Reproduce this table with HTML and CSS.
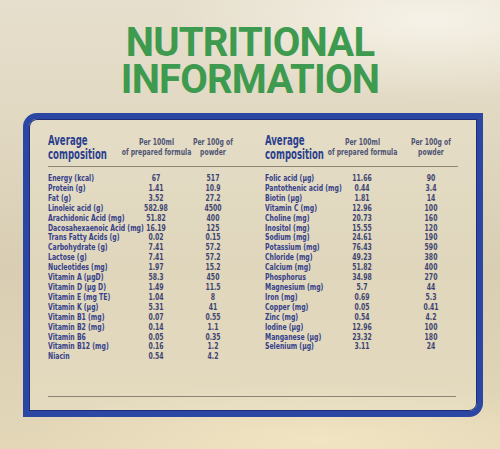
FILE: index.html
```html
<!DOCTYPE html>
<html lang="en">
<head>
  <meta charset="UTF-8" />
  <title>Nutritional Information</title>
  <link rel="stylesheet" href="styles.css">
</head>
<body>
  <div id="pagina">
    <h1 class="titulo">NUTRITIONAL<br>INFORMATION</h1>

    <div class="quadro">
      <div class="cabeca">
        <div class="bloco esq">
          <div class="nome"><span class="avg">Average<br>composition</span></div>
          <div class="c1"><span class="col">Per 100ml<br>of prepared formula</span></div>
          <div class="c2"><span class="col">Per 100g of<br>powder</span></div>
        </div>
        <div class="bloco dir">
          <div class="nome"><span class="avg">Average<br>composition</span></div>
          <div class="c1"><span class="col">Per 100ml<br>of prepared formula</span></div>
          <div class="c2"><span class="col">Per 100g of<br>powder</span></div>
        </div>
      </div>
      <div class="regua"></div>

      <div class="corpo">
        <div class="bloco esq">
          <div class="lista">
            <div class="linha"><span class="nome">Energy (kcal)</span><span class="c1">67</span><span class="c2">517</span></div>
            <div class="linha"><span class="nome">Protein (g)</span><span class="c1">1.41</span><span class="c2">10.9</span></div>
            <div class="linha"><span class="nome">Fat (g)</span><span class="c1">3.52</span><span class="c2">27.2</span></div>
            <div class="linha"><span class="nome">Linoleic acid (g)</span><span class="c1">582.98</span><span class="c2">4500</span></div>
            <div class="linha"><span class="nome">Arachidonic Acid (mg)</span><span class="c1">51.82</span><span class="c2">400</span></div>
            <div class="linha"><span class="nome">Dacosahexaenoic Acid (mg)</span><span class="c1">16.19</span><span class="c2">125</span></div>
            <div class="linha"><span class="nome">Trans Fatty Acids (g)</span><span class="c1">0.02</span><span class="c2">0.15</span></div>
            <div class="linha"><span class="nome">Carbohydrate (g)</span><span class="c1">7.41</span><span class="c2">57.2</span></div>
            <div class="linha"><span class="nome">Lactose (g)</span><span class="c1">7.41</span><span class="c2">57.2</span></div>
            <div class="linha"><span class="nome">Nucleotides (mg)</span><span class="c1">1.97</span><span class="c2">15.2</span></div>
            <div class="linha"><span class="nome">Vitamin A (µgD)</span><span class="c1">58.3</span><span class="c2">450</span></div>
            <div class="linha"><span class="nome">Vitamin D (µg D)</span><span class="c1">1.49</span><span class="c2">11.5</span></div>
            <div class="linha"><span class="nome">Vitamin E (mg TE)</span><span class="c1">1.04</span><span class="c2">8</span></div>
            <div class="linha"><span class="nome">Vitamin K (µg)</span><span class="c1">5.31</span><span class="c2">41</span></div>
            <div class="linha"><span class="nome">Vitamin B1 (mg)</span><span class="c1">0.07</span><span class="c2">0.55</span></div>
            <div class="linha"><span class="nome">Vitamin B2 (mg)</span><span class="c1">0.14</span><span class="c2">1.1</span></div>
            <div class="linha"><span class="nome">Vitamin B6</span><span class="c1">0.05</span><span class="c2">0.35</span></div>
            <div class="linha"><span class="nome">Vitamin B12 (mg)</span><span class="c1">0.16</span><span class="c2">1.2</span></div>
            <div class="linha"><span class="nome">Niacin</span><span class="c1">0.54</span><span class="c2">4.2</span></div>
          </div>
        </div>
        <div class="bloco dir">
          <div class="lista">
            <div class="linha"><span class="nome">Folic acid (µg)</span><span class="c1">11.66</span><span class="c2">90</span></div>
            <div class="linha"><span class="nome">Pantothenic acid (mg)</span><span class="c1">0.44</span><span class="c2">3.4</span></div>
            <div class="linha"><span class="nome">Biotin (µg)</span><span class="c1">1.81</span><span class="c2">14</span></div>
            <div class="linha"><span class="nome">Vitamin C (mg)</span><span class="c1">12.96</span><span class="c2">100</span></div>
            <div class="linha"><span class="nome">Choline (mg)</span><span class="c1">20.73</span><span class="c2">160</span></div>
            <div class="linha"><span class="nome">Inositol (mg)</span><span class="c1">15.55</span><span class="c2">120</span></div>
            <div class="linha"><span class="nome">Sodium (mg)</span><span class="c1">24.61</span><span class="c2">190</span></div>
            <div class="linha"><span class="nome">Potassium (mg)</span><span class="c1">76.43</span><span class="c2">590</span></div>
            <div class="linha"><span class="nome">Chloride (mg)</span><span class="c1">49.23</span><span class="c2">380</span></div>
            <div class="linha"><span class="nome">Calcium (mg)</span><span class="c1">51.82</span><span class="c2">400</span></div>
            <div class="linha"><span class="nome">Phosphorus</span><span class="c1">34.98</span><span class="c2">270</span></div>
            <div class="linha"><span class="nome">Magnesium (mg)</span><span class="c1">5.7</span><span class="c2">44</span></div>
            <div class="linha"><span class="nome">Iron (mg)</span><span class="c1">0.69</span><span class="c2">5.3</span></div>
            <div class="linha"><span class="nome">Copper (mg)</span><span class="c1">0.05</span><span class="c2">0.41</span></div>
            <div class="linha"><span class="nome">Zinc (mg)</span><span class="c1">0.54</span><span class="c2">4.2</span></div>
            <div class="linha"><span class="nome">Iodine (µg)</span><span class="c1">12.96</span><span class="c2">100</span></div>
            <div class="linha"><span class="nome">Manganese (µg)</span><span class="c1">23.32</span><span class="c2">180</span></div>
            <div class="linha"><span class="nome">Selenium (µg)</span><span class="c1">3.11</span><span class="c2">24</span></div>
          </div>
        </div>
      </div>

      <div class="regua fim"></div>
    </div>
  </div>
</body>
</html>
```

FILE: styles.css
```css
html, body {
  margin: 0; padding: 0;
  width: 500px;
  height: 449px;
  overflow: hidden;
}
body {
  background:
    radial-gradient(ellipse 260px 80px at 430px 20px, rgba(250,247,238,0.8), rgba(250,247,238,0) 100%),
    radial-gradient(ellipse 300px 60px at 320px 440px, rgba(243,230,196,0.9), rgba(243,230,196,0) 100%),
    linear-gradient(180deg, #e6dfcd 0%, #e2d9c3 25%, #d9ceb3 60%, #e3d7b8 100%);
  font-family: "DejaVu Sans Condensed", "Liberation Sans", sans-serif;
}
#pagina {
  display: flex;
  flex-direction: column;
  padding-top: 24px;
}
.titulo {
  margin: 0;
  text-align: center;
  font-family: Roboto, "Liberation Sans", sans-serif;
  font-weight: bold;
  font-size: 40px;
  line-height: 37px;
  letter-spacing: -0.8px;
  color: #3e9a4e;
}
.quadro {
  margin: 15px 17px 0 23px;
  height: 304px;
  box-sizing: border-box;
  border: 6px solid #2b47a3;
  border-radius: 14px 0 14px 0;
  box-shadow: inset 0 0 0 1px #1d2f72;
  background: rgba(236,228,206,0.35);
  padding: 14px 0 0 19px;
  display: flex;
  flex-direction: column;
}
.cabeca, .corpo {
  display: flex;
  gap: 15px;
}
.bloco {
  display: flex;
  align-items: center;
}
.corpo .bloco { align-items: flex-start; }
.cabeca .bloco > div {
  display: flex;
  justify-content: center;
  white-space: nowrap;
}
.cabeca .bloco > .nome { justify-content: flex-start; }
.esq .nome { width: 88px; }
.esq .c1 { width: 40px; }
.esq .c2 { width: 74px; }
.dir .nome { width: 74px; }
.dir .c1 { width: 46px; }
.dir .c2 { width: 92px; }

/* a fonte condensada da embalagem: estreita-se a DejaVu */
.avg {
  font-weight: bold;
  font-size: 14px;
  line-height: 14px;
  color: #2b3f8e;
  transform: scaleX(0.68);
  transform-origin: left center;
}
.col {
  font-weight: bold;
  font-size: 8.5px;
  line-height: 10px;
  text-align: center;
  color: #4f5474;
  transform: scaleX(0.8);
}
.regua {
  margin: 5px 19px 0 0;
  border-top: 1px solid #8d8573;
}
.regua.fim {
  margin: auto 21px 14px 0;
  border-top: 1.5px solid #8d8573;
}
.corpo { margin-top: 6px; }
.bloco .lista {
  display: flex;
  flex-direction: column;
}
.linha {
  display: flex;
  font-weight: bold;
  font-size: 9.5px;
  line-height: 9.9px;
  color: #35418a;
  white-space: nowrap;
}
.linha .nome {
  transform: scaleX(0.72);
  transform-origin: left center;
}
.linha .c1, .linha .c2 {
  display: flex;
  justify-content: center;
  color: #3e4572;
  transform: scaleX(0.72);
}
```
